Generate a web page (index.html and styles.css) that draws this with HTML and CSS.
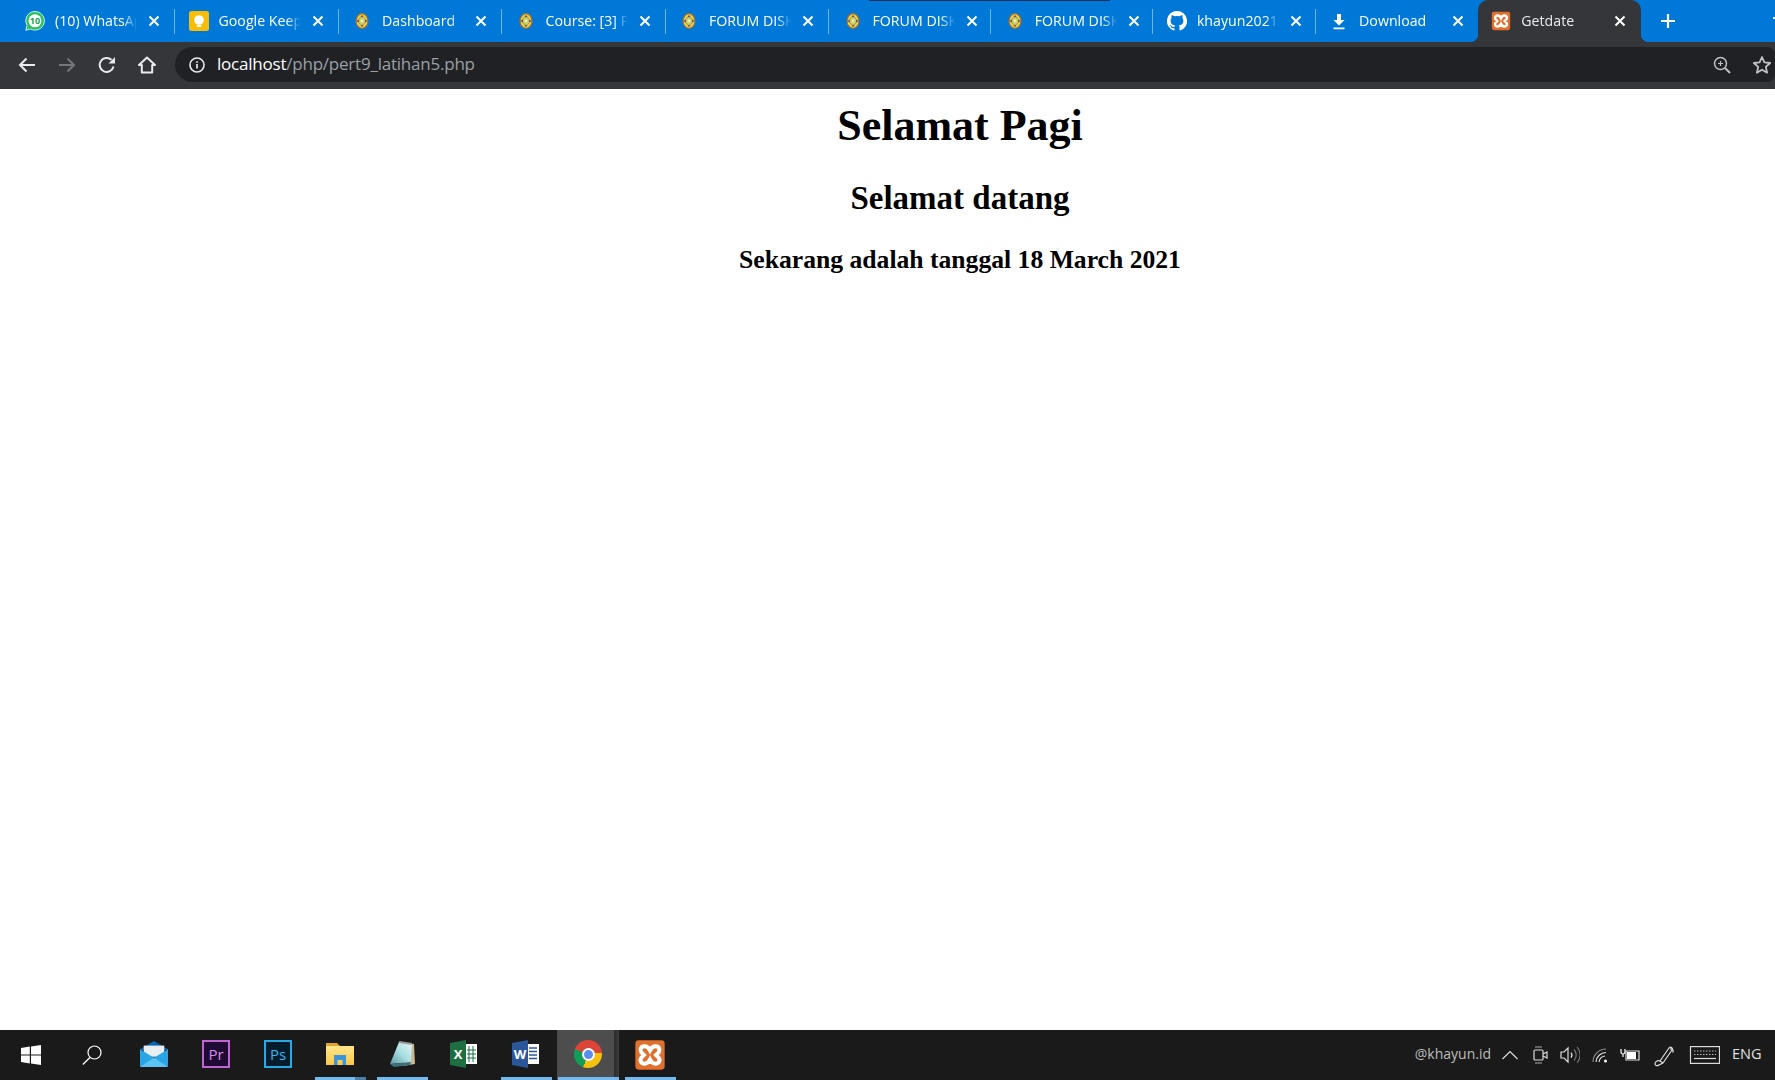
FILE: index.html
```html
<!DOCTYPE html>
<html lang="id">
<head>
<meta charset="utf-8">
<title>Getdate</title>
<link rel="stylesheet" href="styles.css">
</head>
<body>
<svg class="defs" width="0" height="0" aria-hidden="true">
  <defs>
    <linearGradient id="pad" x1="0" y1="1" x2="1" y2="0">
      <stop offset="0" stop-color="#5f9aa6"/>
      <stop offset=".5" stop-color="#a9dfe2"/>
      <stop offset="1" stop-color="#e8f5f5"/>
    </linearGradient>
    <linearGradient id="folderBody" x1="0" y1="0" x2="0" y2="1">
      <stop offset="0" stop-color="#ffe58a"/>
      <stop offset="1" stop-color="#f8c948"/>
    </linearGradient>
  </defs>
  <symbol id="moodle" viewBox="0 0 14 17">
    <ellipse cx="7" cy="8.5" rx="6.3" ry="7.8" fill="#f3d24a" stroke="#a5702c" stroke-width="1.3"/>
    <path d="M7 2.5 12 8.5 7 14.500 2 8.500Z" fill="#c9cf63" stroke="#8d7a3a" stroke-width=".7"/>
    <circle cx="7" cy="3.600" r="1" fill="#5b4a7a"/><circle cx="7" cy="13.400" r="1" fill="#5b4a7a"/>
    <circle cx="3" cy="8.500" r="1" fill="#5b4a7a"/><circle cx="11" cy="8.500" r="1" fill="#5b4a7a"/>
    <circle cx="7" cy="8.500" r="1.500" fill="#eef0b0"/>
  </symbol>
  <symbol id="close" viewBox="0 0 12 12">
    <path d="M1.500 1.500 10.500 10.500M10.500 1.500 1.500 10.500" stroke="#fff" stroke-width="2" fill="none"/>
  </symbol>
  <symbol id="xampp" viewBox="0 0 24 24">
    <rect x="1" y="1" width="22" height="22" rx="2.500" fill="#e0702c"/>
    <path d="M8 5.500C5 5.500 4.200 8 5.500 10L7.500 12 5.500 14C4.200 16 5 18.500 8 18.500 10 18.500 11 17.500 12 15.500 13 17.500 14 18.500 16 18.500 19 18.500 19.800 16 18.500 14L16.500 12 18.500 10C19.800 8 19 5.500 16 5.500 14 5.500 13 6.500 12 8.500 11 6.500 10 5.500 8 5.500Z" fill="none" stroke="#fff" stroke-width="3"/>
  </symbol>
</svg>

<header class="tabstrip">
  <div class="tab">
    <svg class="favicon" viewBox="0 0 20 20"><path d="M10 .5A9.300 9.300 0 0 0 2 14.500L.8 19.300 5.700 18A9.300 9.300 0 1 0 10 .5Z" fill="#25c35a" stroke="#fff" stroke-width=".8"/><circle cx="10" cy="9.800" r="6.500" fill="#fff"/><text x="10" y="13" class="wa-num">10</text></svg>
    <span class="tab-title">(10) WhatsAp</span>
    <svg class="tab-close"><use href="#close"/></svg>
  </div>
  <div class="tab">
    <svg class="favicon" viewBox="0 0 20 20"><rect width="20" height="20" rx="2.500" fill="#fbbc05"/><circle cx="10" cy="9" r="4.800" fill="#fff"/><rect x="7.800" y="14" width="4.400" height="2" fill="#fff"/></svg>
    <span class="tab-title">Google Keep</span>
    <svg class="tab-close"><use href="#close"/></svg>
  </div>
  <div class="tab">
    <svg class="favicon favicon-small"><use href="#moodle"/></svg>
    <span class="tab-title">Dashboard</span>
    <svg class="tab-close"><use href="#close"/></svg>
  </div>
  <div class="tab">
    <svg class="favicon favicon-small"><use href="#moodle"/></svg>
    <span class="tab-title">Course: [3] P</span>
    <svg class="tab-close"><use href="#close"/></svg>
  </div>
  <div class="tab">
    <svg class="favicon favicon-small"><use href="#moodle"/></svg>
    <span class="tab-title">FORUM DISK</span>
    <svg class="tab-close"><use href="#close"/></svg>
  </div>
  <div class="tab">
    <svg class="favicon favicon-small"><use href="#moodle"/></svg>
    <span class="tab-title">FORUM DISK</span>
    <svg class="tab-close"><use href="#close"/></svg>
  </div>
  <div class="tab">
    <svg class="favicon favicon-small"><use href="#moodle"/></svg>
    <span class="tab-title">FORUM DISK</span>
    <svg class="tab-close"><use href="#close"/></svg>
  </div>
  <div class="tab">
    <svg class="favicon" viewBox="0 0 20 20"><path d="M10 0A10 10 0 0 0 6.800 19.500C7.300 19.600 7.500 19.300 7.500 19V17.200C4.700 17.800 4.100 16 4.100 16 3.700 14.800 3 14.500 3 14.500 2.100 13.900 3.100 13.900 3.100 13.900 4.100 14 4.600 15 4.600 15 5.500 16.500 7 16.100 7.500 15.800 7.600 15.200 7.900 14.700 8.200 14.500 6 14.200 3.600 13.400 3.600 9.600 3.600 8.500 4 7.600 4.600 6.900 4.500 6.700 4.200 5.600 4.700 4.300 4.700 4.300 5.500 4 7.500 5.300A9.600 9.600 0 0 1 12.500 5.300C14.500 4 15.300 4.300 15.300 4.300 15.800 5.600 15.500 6.700 15.400 6.900 16 7.600 16.400 8.500 16.400 9.600 16.400 13.400 14 14.200 11.800 14.500 12.200 14.800 12.500 15.400 12.500 16.300V19C12.500 19.300 12.700 19.600 13.200 19.500A10 10 0 0 0 10 0Z" fill="#fff"/></svg>
    <span class="tab-title">khayun2021/</span>
    <svg class="tab-close"><use href="#close"/></svg>
  </div>
  <div class="tab tab-nosep">
    <svg class="favicon" viewBox="0 0 20 20"><path d="M8 3h4v6h3.500L10 14.500 4.500 9H8ZM4.500 16.500h11v1.800h-11Z" fill="#fff"/></svg>
    <span class="tab-title">Download</span>
    <svg class="tab-close"><use href="#close"/></svg>
  </div>
  <div class="tab tab-active">
    <svg class="favicon"><use href="#xampp"/></svg>
    <span class="tab-title">Getdate</span>
    <svg class="tab-close"><use href="#close"/></svg>
  </div>
  <svg class="new-tab" viewBox="0 0 16 16"><path d="M8 1v14M1 8h14" stroke="#fff" stroke-width="2.200" fill="none"/></svg>
  <span class="top-mark"></span>
  <span class="min-mark"></span>
</header>

<nav class="toolbar">
  <svg class="nav-icon" viewBox="0 0 20 20"><path d="M18 10H3M9.500 3.500 3 10l6.500 6.500" fill="none" stroke="#e8eaed" stroke-width="2"/></svg>
  <svg class="nav-icon" viewBox="0 0 20 20"><path d="M2 10h15M10.500 3.500 17 10l-6.500 6.500" fill="none" stroke="#74767a" stroke-width="2"/></svg>
  <svg class="nav-icon" viewBox="0 0 20 20"><path d="M16.500 11.500A7 7 0 1 1 14.500 4.800" fill="none" stroke="#e8eaed" stroke-width="2"/><path d="M11.500 8.500h6.500V2Z" fill="#e8eaed"/></svg>
  <svg class="nav-icon" viewBox="0 0 20 20"><path d="M10 2.500 2 10h2.800v7.500h10.400V10H18Z" fill="none" stroke="#e8eaed" stroke-width="2" stroke-linejoin="round"/></svg>
  <div class="omnibox">
    <svg class="info-icon" viewBox="0 0 16 16"><circle cx="8" cy="8" r="7" fill="none" stroke="#e8eaed" stroke-width="1.600"/><path d="M8 7v4.500M8 4.200v1.600" stroke="#e8eaed" stroke-width="1.700"/></svg>
    <span class="url"><span class="url-host">localhost</span>/php/pert9_latihan5.php</span>
    <svg class="zoom-icon" viewBox="0 0 18 18"><circle cx="7.500" cy="7.500" r="6" fill="none" stroke="#bdc1c6" stroke-width="1.500"/><path d="M12 12l5 5" stroke="#bdc1c6" stroke-width="2"/><path d="M5 7.500h5M7.500 5v5" stroke="#bdc1c6" stroke-width="1.200"/></svg>
    <svg class="star-icon" viewBox="0 0 20 20"><path d="M10 2l2.400 5.400 5.800.6-4.400 3.900 1.300 5.800-5.100-3-5.100 3 1.300-5.800L1.800 8l5.800-.6Z" fill="none" stroke="#bdc1c6" stroke-width="1.800" stroke-linejoin="round"/></svg>
  </div>
</nav>

<main class="page">
  <h1>Selamat Pagi</h1>
  <h2>Selamat datang</h2>
  <h3>Sekarang adalah tanggal 18 March 2021</h3>
</main>

<footer class="taskbar">
  <div class="slot slot-first">
    <svg class="ico-win" viewBox="0 0 20 20"><path d="M0 3 8.800 1.600V9.500H0ZM10 1.400 20 0V9.500H10ZM0 10.500H8.800V18.400L0 17ZM10 10.500H20V20L10 18.600Z" fill="#fff"/></svg>
  </div>
  <div class="slot">
    <svg class="ico-search" viewBox="0 0 20 20"><circle cx="12.500" cy="7.500" r="6.500" fill="none" stroke="#fff" stroke-width="1.200"/><path d="M8 12.500.8 19.500" stroke="#fff" stroke-width="1.300"/></svg>
  </div>
  <div class="slot">
    <svg class="ico-app" viewBox="0 0 30 28"><path d="M15 0 30 9V10H0V9Z" fill="#0b62ad"/><path d="M4 5h22v12H4Z" fill="#e8eef2"/><path d="M0 9 15 18 30 9V26a2 2 0 0 1-2 2H2a2 2 0 0 1-2-2Z" fill="#2aa5e6"/><path d="M0 28 15 18 30 28Z" fill="#5cc4f2"/></svg>
  </div>
  <div class="slot">
    <svg class="ico-app" viewBox="0 0 28 28"><rect x="1" y="1" width="26" height="26" fill="#1e0a33" stroke="#c064d8" stroke-width="2"/><text x="14" y="20" class="app-letter pr">Pr</text></svg>
  </div>
  <div class="slot">
    <svg class="ico-app" viewBox="0 0 28 28"><rect x="1" y="1" width="26" height="26" fill="#051c2c" stroke="#27a9e6" stroke-width="2"/><text x="14" y="20" class="app-letter ps">Ps</text></svg>
  </div>
  <div class="slot slot-open slot-multi">
    <svg class="ico-app" viewBox="0 0 28 24"><path d="M0 1h11l3 3H0Z" fill="#e0a52c"/><path d="M0 4h28v19H0Z" fill="url(#folderBody)"/><path d="M8 23V13h12v10h-3.500v-5h-5v5Z" fill="#3f93d8"/></svg>
  </div>
  <div class="slot slot-open">
    <svg class="ico-app" viewBox="0 0 28 28"><path d="M12 2 26 4 27 24 15 26Z" fill="#c9b98e"/><path d="M11 2 24 4 23 22 2 24Z" fill="url(#pad)"/><path d="M2 24 23 22 22 25 6 27Z" fill="#3f6f7c"/><path d="M11 2 24 4" stroke="#9c9c9c" stroke-width="2"/></svg>
  </div>
  <div class="slot">
    <svg class="ico-app" viewBox="0 0 28 28"><path d="M0 3 16 0V28L0 25Z" fill="#1d6f42"/><rect x="16" y="4" width="11" height="20" fill="#fff"/><path d="M19 6v16M23 6v16M17 10h9M17 14h9M17 18h9" stroke="#1d6f42" stroke-width="1"/><text x="8" y="19" class="app-letter xl">X</text></svg>
  </div>
  <div class="slot slot-open">
    <svg class="ico-app" viewBox="0 0 28 28"><path d="M0 3 16 0V28L0 25Z" fill="#2b579a"/><rect x="16" y="4" width="11" height="20" fill="#fff"/><path d="M17 8h8M17 11.500h8M17 15h8M17 18.500h8" stroke="#2b579a" stroke-width="1.400"/><text x="8" y="19" class="app-letter xl">W</text></svg>
  </div>
  <div class="slot slot-open slot-active">
    <span class="chrome"><span class="chrome-eye"></span></span>
  </div>
  <div class="slot slot-open">
    <svg class="ico-xampp"><use href="#xampp"/></svg>
  </div>
  <div class="tray">
    <span class="tray-text">@khayun.id</span>
    <svg class="t16" viewBox="0 0 16 10"><path d="M.5 9 8 1.500 15.500 9" fill="none" stroke="#ddd" stroke-width="1.200"/></svg>
    <svg class="t18" viewBox="0 0 18 20"><rect x="4" y="5" width="9" height="10" rx="1" fill="none" stroke="#ddd" stroke-width="1.200"/><path d="M13 9l4-2v6l-4-2" fill="none" stroke="#ddd" stroke-width="1.200"/><path d="M5 2h7M5 18h7" stroke="#aaa" stroke-width="1"/></svg>
    <svg class="t20" viewBox="0 0 20 20"><path d="M1 7h3l4-4v14l-4-4H1Z" fill="none" stroke="#ddd" stroke-width="1.200"/><path d="M11 7.500a4 4 0 0 1 0 5" fill="none" stroke="#ddd" stroke-width="1.200"/><path d="M14 4.500a8 8 0 0 1 0 11M17 2a12 12 0 0 1 0 16" fill="none" stroke="#777" stroke-width="1.100"/></svg>
    <svg class="t16" viewBox="0 0 16 16"><path d="M1 15A13 13 0 0 1 14 2" fill="none" stroke="#888" stroke-width="1.200"/><path d="M4 15A10 10 0 0 1 14 5.500M7 15A7 7 0 0 1 13 9" fill="none" stroke="#ddd" stroke-width="1.200"/><circle cx="13.500" cy="14" r="1.500" fill="#fff"/></svg>
    <svg class="t20" viewBox="0 0 20 14"><path d="M1 1v3a2 2 0 0 0 4 0V1M3 6v3" fill="none" stroke="#fff" stroke-width="1.200"/><path d="M6 3h13v9H6Z" fill="none" stroke="#ddd" stroke-width="1.200"/><rect x="7" y="4" width="9" height="7" fill="#fff"/></svg>
    <svg class="t24" viewBox="0 0 24 24"><path d="M8 18 17 5c1.500-2 4.500 0 3 2L11 20ZM8 18c-3-1-5 1-5 3s3 2 4 1l4-2M18 6c3-.5 4 2 2.500 3.500" fill="none" stroke="#ddd" stroke-width="1.200"/></svg>
    <svg class="t32" viewBox="0 0 32 18"><rect x="2.500" y=".6" width="29" height="16.800" fill="none" stroke="#ddd" stroke-width="1.200"/><path d="M6 5h22M6 8.500h22" stroke="#bbb" stroke-width="1.200" stroke-dasharray="1.500 1.500"/><path d="M6 12.500h22" stroke="#ddd" stroke-width="1.200"/></svg>
    <span class="tray-lang">ENG</span>
  </div>
</footer>
</body>
</html>
```

FILE: styles.css
```css
* { box-sizing: border-box; }
html, body { margin: 0; height: 100%; }
body {
  width: 1775px;
  height: 1080px;
  overflow: hidden;
  display: flex;
  flex-direction: column;
  background: #fff;
  font-family: "Open Sans", "Noto Sans", sans-serif;
}
.defs { position: absolute; }

/* tab strip */
.tabstrip {
  position: relative;
  flex: 0 0 42px;
  display: flex;
  padding-left: 11.5px;
  background: #0078d7;
}
.tab {
  position: relative;
  flex: 0 0 163.500px;
  min-width: 0;
  display: flex;
  align-items: center;
  padding: 0 13.500px;
  color: #fff;
  font-size: 14.200px;
}
.tab:nth-child(n+6) { flex-basis: 162.200px; }
.tab-active:nth-child(n+6) { flex-basis: 163px; }
.tab::after {
  content: "";
  position: absolute;
  right: 0;
  top: 9px;
  height: 25px;
  width: 1px;
  background: #6fb4ea;
}
.tab-nosep::after, .tab-active::after { display: none; }
.tab-active {
  background: #35363a;
  border-radius: 10px 10px 0 0;
  color: #e8eaed;
}
.tab-active::before, .tab-active::after {
  content: "";
  display: block;
  position: absolute;
  bottom: 0;
  top: auto;
  width: 8px;
  height: 8px;
  background: radial-gradient(circle at 0 0, transparent 8px, #35363a 8.500px);
}
.tab-active::before { left: -8px; }
.tab-active::after { right: -8px; background: radial-gradient(circle at 100% 0, transparent 8px, #35363a 8.500px); }
.favicon {
  flex: 0 0 20px;
  width: 20px;
  height: 20px;
}
.favicon-small { height: 16px; }
.tab-title {
  flex: 0 0 90px;
  margin: -2px -8px 0 10px;
  white-space: nowrap;
  -webkit-mask-image: linear-gradient(to right, #000 68px, transparent 82px);
  mask-image: linear-gradient(to right, #000 68px, transparent 82px);
}
.tab-close {
  flex: 0 0 12px;
  width: 12px;
  height: 12px;
  margin-left: 11px;
}
.new-tab {
  width: 16px;
  height: 16px;
  margin: 13px 0 0 19px;
}
.top-mark {
  position: absolute;
  left: 869px;
  top: 0;
  width: 241px;
  height: 1px;
  background: #0c2f5c;
}
.min-mark {
  position: absolute;
  right: 0;
  top: 17px;
  width: 2px;
  height: 2px;
  background: #fff;
}

/* toolbar */
.toolbar {
  flex: 0 0 47px;
  display: flex;
  align-items: center;
  padding: 0 0 2px 17px;
  background: #35363a;
  gap: 20px;
}
.nav-icon {
  width: 20px;
  height: 20px;
}
.omnibox {
  flex: 1;
  height: 35px;
  margin-left: -2px;
  display: flex;
  align-items: center;
  padding: 0 3px 0 14px;
  background: #202124;
  border-radius: 18px 8px 8px 18px;
}
.info-icon {
  width: 16px;
  height: 16px;
}
.url {
  margin: -2px 0 0 12px;
  font-size: 17px;
  letter-spacing: -.22px;
  color: #9aa0a6;
}
.url-host { color: #fff; }
.zoom-icon {
  width: 18px;
  height: 18px;
  margin-left: auto;
}
.star-icon {
  width: 20px;
  height: 20px;
  margin-left: 21px;
}

/* page */
.page {
  flex: 1;
  padding: 11px 0 0 145px;
  text-align: center;
  color: #000;
  font-family: "Liberation Serif", serif;
}
h1 { margin: 0 0 29px; font-size: 44px; }
h2 { margin: 0 0 28px; font-size: 33px; }
h3 { margin: 0; font-size: 25.650px; }

/* taskbar */
.taskbar {
  flex: 0 0 50px;
  display: flex;
  align-items: center;
  background: #1a1a1a;
  height: 50px;
}
.slot {
  position: relative;
  flex: 0 0 62px;
  height: 50px;
  display: flex;
  align-items: center;
  justify-content: center;
}
.slot-first { flex-basis: 61px; }
.slot-open::after {
  content: "";
  position: absolute;
  left: 5.500px;
  right: 5.500px;
  bottom: 0;
  height: 3px;
  background: #76b9ed;
}
.slot-multi::after {
  background: linear-gradient(to right, #76b9ed 40px, #4a7fa8 40px);
}
.slot-active {
  background: linear-gradient(to right, #4d4d4d 57px, #2c2c2c 57px, #3c3c3c);
}
.slot-active::after { left: 1px; right: 0; }
.ico-win { width: 20px; height: 20px; margin-top: -1px; }
.ico-search { width: 20px; height: 20px; margin-top: -1px; }
.ico-app { width: 28px; height: 28px; margin-top: -2px; }
.ico-xampp { width: 32px; height: 32px; margin-top: -1px; }
.wa-num { font-size: 9px; font-weight: 700; text-anchor: middle; fill: #16a34a; font-family: "Open Sans", sans-serif; }
.app-letter { text-anchor: middle; font-family: "Open Sans", sans-serif; font-size: 15px; }
.pr { fill: #d58cf0; }
.ps { fill: #38b6f0; }
.xl { fill: #fff; font-weight: 700; font-size: 13px; }
.chrome {
  width: 28px;
  height: 28px;
  margin-top: -2px;
  border-radius: 50%;
  display: flex;
  align-items: center;
  justify-content: center;
  background: conic-gradient(#db4437 -70deg, #db4437 85deg, #f4c20d 85deg, #f4c20d 200deg, #0f9d58 200deg, #0f9d58 290deg, #db4437 290deg);
}
.chrome-eye {
  width: 13px;
  height: 13px;
  border-radius: 50%;
  background: #5b8def;
  border: 2px solid #fff;
}
.tray {
  margin-left: auto;
  display: flex;
  align-items: center;
  gap: 12px;
  padding-right: 13px;
  color: #ccc;
  font-size: 14px;
}
.tray-text { color: #bdbdbd; margin: -3px -1px 0 0; }
.tray-lang { color: #e0e0e0; width: 30px; margin-top: -3px; font-size: 14.500px; }
.t16 { width: 16px; height: 16px; }
.t18 { width: 18px; height: 20px; }
.t20 { width: 20px; height: 20px; }
.t24 { width: 24px; height: 24px; }
.t32 { width: 32px; height: 18px; }
```
